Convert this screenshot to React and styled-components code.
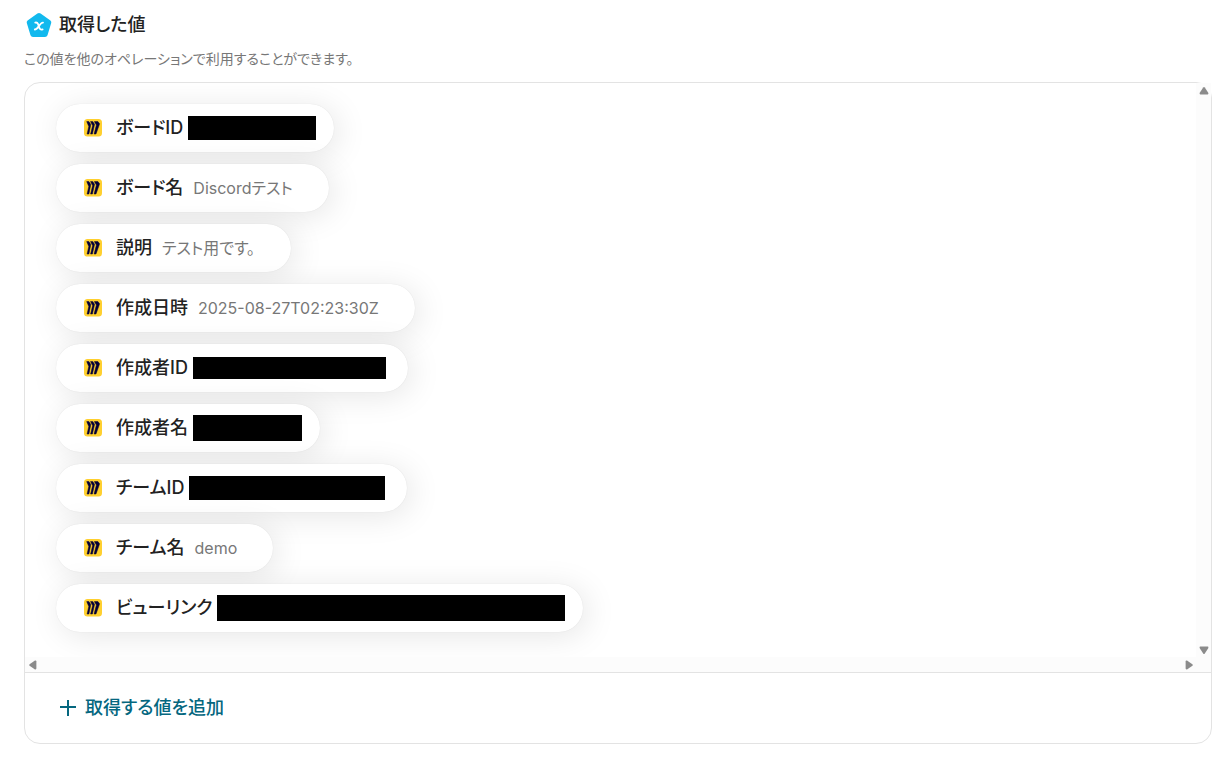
import React from "react";
import styled, { createGlobalStyle } from "styled-components";

const outputs = [
  { name: "ボードID", hidden: { width: 128, height: 24, tail: 18 } },
  { name: "ボード名", value: "Discordテスト" },
  { name: "説明", value: "テスト用です。" },
  { name: "作成日時", value: "2025-08-27T02:23:30Z" },
  { name: "作成者ID", hidden: { width: 193, height: 22, tail: 22 } },
  { name: "作成者名", hidden: { width: 109, height: 26, tail: 18 } },
  { name: "チームID", hidden: { width: 196, height: 24, tail: 22 } },
  { name: "チーム名", value: "demo" },
  { name: "ビューリンク", hidden: { width: 348, height: 26, tail: 18 } },
];

const rotation = { up: 0, right: 90, down: 180, left: 270 };

const PentagonIcon = () => (
  <svg width="26" height="26" viewBox="0 0 26 26" aria-hidden="true">
    <path
      d="M11.4 1.4 Q13 0.4 14.6 1.4 L24.4 8.4 Q25.7 9.5 25.2 11.1 L21.5 23.2 Q20.9 25 19 25 H7 Q5.1 25 4.5 23.2 L0.8 11.1 Q0.3 9.5 1.6 8.4 Z"
      fill="#12b9ee"
    />
    <path
      d="M9.2 10.6 C10.8 10.2 11.5 10.7 12.1 12.1 L13.5 16 C14 17.4 15 17.9 16.6 17.4 M17 10.6 C15.4 10.4 14.4 11.8 13 14 C11.4 16.3 10.6 17.5 8.8 17.5"
      fill="none"
      stroke="#fff"
      strokeWidth="1.8"
      strokeLinecap="round"
    />
  </svg>
);

const MiroIcon = () => (
  <svg width="18" height="18" viewBox="0 0 18 18" aria-hidden="true">
    <rect width="18" height="17.6" rx="3.5" fill="#ffd02f" />
    <path
      d="M2.7 2.6 H4.9 L6.8 5.6 L4.9 15 H3.1 L4.8 7.4 Z M6.5 2.6 H8.7 L10.6 5.2 L8.4 15 H6.6 L8.6 6.6 Z M10.3 2.6 H13.9 L15.6 4.8 L12 15 H10.1 L12.4 5.9 Z"
      fill="#050038"
      stroke="#050038"
      strokeWidth="0.5"
      strokeLinejoin="round"
    />
  </svg>
);

const PlusIcon = () => (
  <svg width="16" height="16" viewBox="0 0 16 16" aria-hidden="true">
    <path d="M8 0 V16 M0 7 H16" stroke="currentColor" strokeWidth="2" />
  </svg>
);

const Arrow = ({ direction }) => (
  <svg width="10" height="10" viewBox="0 0 10 10" aria-hidden="true">
    <path
      d="M4.2 1.6 Q5 0.6 5.8 1.6 L9.4 7 Q9.6 8.4 8.6 8.4 H1.4 Q0.4 8.4 0.6 7 Z"
      fill="#8b8b8b"
      transform={`rotate(${rotation[direction]} 5 5)`}
    />
  </svg>
);

const App = () => {
  return (
    <>
      <GlobalStyle />
      <Page>
        <Heading>
          <PentagonIcon />
          <h2>取得した値</h2>
        </Heading>
        <Description>
          この値を他のオペレーションで利用することができます。
        </Description>
        <Card>
          <ScrollArea>
            <OutputList>
              {outputs.map(({ name, value, hidden }) => (
                <OutputPill key={name} $tail={hidden ? hidden.tail : 36}>
                  <MiroIcon />
                  <OutputName>{name}</OutputName>
                  {hidden ? (
                    <Redacted $width={hidden.width} $height={hidden.height} />
                  ) : (
                    <OutputValue>{value}</OutputValue>
                  )}
                </OutputPill>
              ))}
            </OutputList>
            <VerticalTrack>
              <ArrowButton type="button" aria-label="上へスクロール">
                <Arrow direction="up" />
              </ArrowButton>
              <ArrowButton type="button" aria-label="下へスクロール">
                <Arrow direction="down" />
              </ArrowButton>
            </VerticalTrack>
            <HorizontalTrack>
              <ArrowButton type="button" aria-label="左へスクロール">
                <Arrow direction="left" />
              </ArrowButton>
              <ArrowButton type="button" aria-label="右へスクロール">
                <Arrow direction="right" />
              </ArrowButton>
            </HorizontalTrack>
            <TrackCorner />
          </ScrollArea>
          <CardFooter>
            <AddButton type="button">
              <PlusIcon />
              取得する値を追加
            </AddButton>
          </CardFooter>
        </Card>
      </Page>
    </>
  );
};

const GlobalStyle = createGlobalStyle`
  * {
    box-sizing: border-box;
  }

  body {
    margin: 0;
    background-color: #fff;
    color: #222;
    font-family: "Inter", "Noto Sans CJK JP", sans-serif;
    font-feature-settings: "palt";
  }
`;

const Page = styled.main`
  padding: 12px 19px 22px 24px;
`;

const Heading = styled.div`
  display: flex;
  align-items: center;
  gap: 7px;
  padding-left: 2px;
  height: 26px;

  h2 {
    margin: 0;
    font-size: 18px;
    line-height: 26px;
    font-weight: 500;
  }
`;

const Description = styled.p`
  margin: 11px 0 13px;
  font-size: 14px;
  line-height: 20px;
  color: #777;
`;

const Card = styled.section`
  border: 1px solid #e3e3e3;
  border-radius: 16px;
`;

const ScrollArea = styled.div`
  display: grid;
  grid-template-columns: minmax(0, 1fr) 15px;
  grid-template-rows: auto 15px;
`;

const OutputList = styled.ul`
  display: flex;
  flex-direction: column;
  align-items: flex-start;
  gap: 12px;
  margin: 0;
  padding: 21px 31px 25px;
  list-style: none;
  overflow: hidden;
  border-top-left-radius: 15px;
`;

const OutputPill = styled.li`
  display: flex;
  align-items: center;
  height: 48px;
  padding: 0 ${({ $tail }) => $tail}px 0 28px;
  border-radius: 24px;
  background-color: #fff;
  box-shadow: 0 0 1px rgba(0, 0, 0, 0.12), 4px 4px 32px rgba(0, 0, 0, 0.1);
  white-space: nowrap;
`;

const OutputName = styled.span`
  margin-left: 14px;
  font-size: 18px;
  line-height: 26px;
  font-weight: 500;
`;

const OutputValue = styled.span`
  margin-left: 10px;
  font-size: 16px;
  line-height: 24px;
  color: #777;
`;

const Redacted = styled.span`
  margin-left: 5px;
  width: ${({ $width }) => $width}px;
  height: ${({ $height }) => $height}px;
  background-color: #000;
`;

const VerticalTrack = styled.div`
  display: flex;
  flex-direction: column;
  justify-content: space-between;
  background-color: #fcfcfc;
`;

const HorizontalTrack = styled.div`
  display: flex;
  justify-content: space-between;
  background-color: #fcfcfc;
`;

const TrackCorner = styled.div`
  background-color: #fcfcfc;
`;

const ArrowButton = styled.button`
  display: flex;
  align-items: center;
  justify-content: center;
  width: 15px;
  height: 15px;
  padding: 0;
  border: none;
  background: none;
`;

const CardFooter = styled.div`
  display: flex;
  padding: 20px 35px;
  border-top: 1px solid #e3e3e3;
`;

const AddButton = styled.button`
  display: flex;
  align-items: center;
  gap: 9px;
  padding: 0;
  border: none;
  background: none;
  color: #05677f;
  font-family: inherit;
  font-feature-settings: inherit;
  font-size: 18px;
  line-height: 30px;
  font-weight: 500;
  cursor: pointer;
`;

export default App;
